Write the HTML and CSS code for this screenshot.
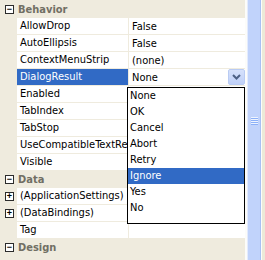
FILE: index.html
```html
<!DOCTYPE html>
<html lang="en">
<head>
  <meta charset="UTF-8" />
  <title>Properties</title>
  <link rel="stylesheet" href="styles.css">
</head>

<body>
  <div class="grid">
    <div class="rows">
      <div class="cat"><span class="box">&minus;</span>Behavior</div>
      <div class="prop"><span class="margin"></span><span class="name">AllowDrop</span><span class="value">False</span></div>
      <div class="prop"><span class="margin"></span><span class="name">AutoEllipsis</span><span class="value">False</span></div>
      <div class="prop"><span class="margin"></span><span class="name">ContextMenuStrip</span><span class="value">(none)</span></div>
      <div class="prop selected">
        <span class="margin"></span><span class="name">DialogResult</span>
        <span class="value">None
          <span class="drop-btn">
            <svg width="9" height="6" viewBox="0 0 9 6"><path d="M1 1 L4.5 4.5 L8 1" fill="none" stroke="#4d6185" stroke-width="2"/></svg>
          </span>
        </span>
      </div>
      <!-- values under the open list are hidden by it -->
      <div class="prop"><span class="margin"></span><span class="name">Enabled</span><span class="value"></span></div>
      <div class="prop"><span class="margin"></span><span class="name">TabIndex</span><span class="value"></span></div>
      <div class="prop"><span class="margin"></span><span class="name">TabStop</span><span class="value"></span></div>
      <div class="prop"><span class="margin"></span><span class="name">UseCompatibleTextRe</span><span class="value"></span></div>
      <div class="prop"><span class="margin"></span><span class="name">Visible</span><span class="value"></span></div>
      <div class="cat"><span class="box">&minus;</span>Data</div>
      <div class="prop"><span class="margin"><span class="box">+</span></span><span class="name">(ApplicationSettings)</span><span class="value"></span></div>
      <div class="prop"><span class="margin"><span class="box">+</span></span><span class="name">(DataBindings)</span><span class="value"></span></div>
      <div class="prop"><span class="margin"></span><span class="name">Tag</span><span class="value"></span></div>
      <div class="cat"><span class="box">&minus;</span>Design</div>
    </div>
    <div class="scrollbar">
      <div class="thumb"><span class="grip"></span></div>
    </div>
  </div>

  <ul class="dropdown">
    <li>None</li>
    <li>OK</li>
    <li>Cancel</li>
    <li>Abort</li>
    <li>Retry</li>
    <li class="active">Ignore</li>
    <li>Yes</li>
    <li>No</li>
  </ul>
</body>
</html>
```

FILE: styles.css
```css
body {
  margin: 0;
  width: 265px;
  height: 260px;
  overflow: hidden;
  background-color: #ece9d8;
  font-family: 'DejaVu Sans Condensed', 'Liberation Sans', sans-serif;
  font-size: 11px;
  color: #000;
  position: relative;
}

.grid {
  display: flex;
  height: 260px;
}

.rows {
  width: 245px;
  padding-top: 1px;
  background-color: #efebde;
  overflow: hidden;
}

.cat {
  display: flex;
  align-items: center;
  height: 16px;
  border-bottom: 1px solid #efebde;
  font-weight: bold;
  color: #716f64;
}

.box {
  display: flex;
  align-items: center;
  justify-content: center;
  width: 7px;
  height: 7px;
  margin: 0 4px 0 5px;
  border: 1px solid #2b2b2b;
  background-color: #fff;
  color: #000;
  font-family: 'Liberation Sans', sans-serif;
  font-weight: bold;
  font-size: 9px;
  line-height: 7px;
}

.prop {
  display: flex;
  height: 16px;
  border-bottom: 1px solid #efebde;
}

.margin {
  display: flex;
  align-items: center;
  width: 17px;
  flex-shrink: 0;
}

.margin .box {
  margin: 0 0 0 5px;
}

.name {
  width: 108px;
  flex-shrink: 0;
  padding-left: 3px;
  line-height: 16px;
  background-color: #fff;
  white-space: nowrap;
  overflow: hidden;
  border-right: 1px solid #efebde;
}

.value {
  display: flex;
  align-items: center;
  flex: 1;
  padding-left: 3px;
  background-color: #fff;
  white-space: nowrap;
}

.selected .name {
  background-color: #316ac5;
  color: #fff;
}

.drop-btn {
  display: flex;
  align-items: center;
  justify-content: center;
  width: 15px;
  height: 14px;
  margin-left: auto;
  border: 1px solid #b9cbf3;
  border-radius: 2px;
  background: linear-gradient(#d6e1fb, #bfd0f8);
}

.scrollbar {
  width: 14px;
  padding: 0 1px 0 2px;
  background-color: #fcfcfa;
}

.thumb {
  height: 100%;
  box-sizing: border-box;
  border-left: 1px solid #e3ebfd;
  border-right: 1px solid #a9bff3;
  background-color: #c1d3fb;
  display: flex;
  justify-content: center;
  padding-top: 117px;
}

.grip {
  width: 7px;
  height: 8px;
  background: repeating-linear-gradient(#eef4fe 0 1px, #8cb0f8 1px 2px);
}

.dropdown {
  position: absolute;
  left: 127px;
  top: 87px;
  width: 116px;
  height: 135px;
  margin: 0;
  padding: 0;
  list-style: none;
  border: 1px solid #000;
  background-color: #fff;
}

.dropdown li {
  height: 16px;
  line-height: 16px;
  padding-left: 2px;
}

.dropdown .active {
  background-color: #316ac5;
  color: #fff;
}
```
